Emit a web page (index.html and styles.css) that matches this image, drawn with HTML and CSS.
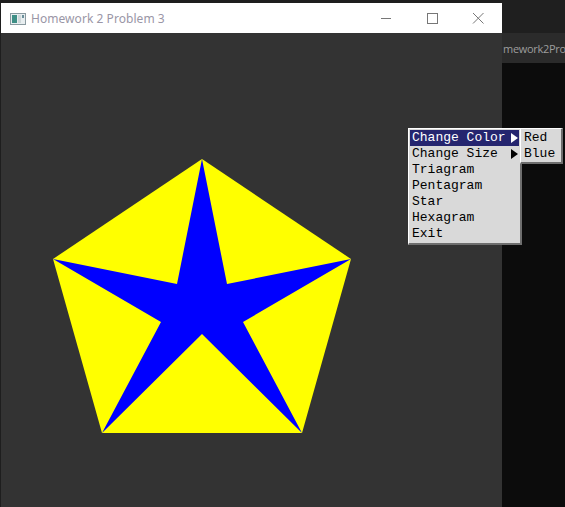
FILE: index.html
```html
<!DOCTYPE html>
<html>
<head>
<meta charset="utf-8">
<link rel="stylesheet" href="styles.css">
</head>
<body>
<div class="screen">
  <div class="edge"></div>
  <div class="window">
    <div class="titlebar">
      <svg class="app-icon" width="16" height="12" viewBox="0 0 16 12">
        <rect x="0.5" y="0.5" width="15" height="11" fill="#e8eef0" stroke="#8a9aa0"/>
        <rect x="2" y="2" width="5" height="8" fill="#3f8f86"/>
        <rect x="8" y="2" width="3" height="8" fill="#cfd8da"/>
        <rect x="12" y="2" width="2" height="3" fill="#6a8f9a"/>
      </svg>
      <span class="title">Homework 2 Problem 3</span>
      <div class="controls">
        <svg class="ctl" width="46" height="30" viewBox="0 0 46 30"><line x1="18" y1="15.5" x2="28" y2="15.5" stroke="#777" stroke-width="1"/></svg>
        <svg class="ctl" width="46" height="30" viewBox="0 0 46 30"><rect x="18.5" y="10.5" width="10" height="10" fill="none" stroke="#777" stroke-width="1"/></svg>
        <svg class="ctl" width="46" height="30" viewBox="0 0 46 30"><path d="M18 10 L28.5 20.5 M28.5 10 L18 20.5" stroke="#777" stroke-width="1" fill="none"/></svg>
      </div>
    </div>
    <div class="client">
      <svg class="drawing" width="501" height="474" viewBox="0 0 501 474">
        <polygon points="201,126 350,226 301,400 101,400 52,226" fill="#ffff00"/>
        <polygon points="201,126 226,251 350,226 242,289 301,400 201,301 101,400 160,289 52,226 176,251" fill="#0000ff"/>
      </svg>
      <div class="menu">
        <div class="item active"><span>Change Color</span><span class="arrow white"></span></div>
        <div class="item"><span>Change Size</span><span class="arrow"></span></div>
        <div class="item"><span>Triagram</span></div>
        <div class="item"><span>Pentagram</span></div>
        <div class="item"><span>Star</span></div>
        <div class="item"><span>Hexagram</span></div>
        <div class="item"><span>Exit</span></div>
      </div>
      <div class="submenu">
        <div class="item"><span>Red</span></div>
        <div class="item"><span>Blue</span></div>
      </div>
    </div>
  </div>
  <div class="side">
    <div class="side-top"></div>
    <div class="tabbar"><span class="tab">mework2Pro</span></div>
    <div class="side-body"></div>
  </div>
</div>
</body>
</html>
```

FILE: styles.css
```css
html, body {
  margin: 0;
  padding: 0;
  background: #0c0c0c;
}
.screen {
  display: flex;
  width: 565px;
  height: 507px;
  overflow: hidden;
  background: #1e1e1e;
}
.edge {
  width: 1px;
  flex: none;
  background: #1e1e1e;
}
.window {
  width: 501px;
  flex: none;
  margin-top: 3px;
  display: flex;
  flex-direction: column;
  position: relative;
}
.titlebar {
  height: 30px;
  background: #ffffff;
  display: flex;
  align-items: center;
}
.app-icon {
  margin-left: 9px;
  margin-top: 1px;
}
.title {
  margin-left: 5px;
  font-family: "Noto Sans", "Open Sans", sans-serif;
  font-size: 12px;
  color: #9a96a6;
  letter-spacing: 0.05px;
}
.controls {
  margin-left: auto;
  display: flex;
  margin-right: 1px;
}
.ctl {
  display: block;
}
.client {
  flex: 1;
  background: #333333;
  position: relative;
}
.drawing {
  display: block;
}
.menu {
  position: absolute;
  left: 407px;
  top: 95px;
  width: 108px;
  padding: 1px 1px 1px 2px;
  background: #d9d9d9;
  border-top: 1px solid #ffffff;
  border-left: 1px solid #ffffff;
  border-right: 2px solid #6e6e6e;
  border-bottom: 2px solid #6e6e6e;
  font-family: "Liberation Mono", "DejaVu Sans Mono", monospace;
  font-size: 13px;
  color: #000;
}
.submenu {
  position: absolute;
  left: 519px;
  top: 95px;
  width: 37px;
  padding: 1px 1px 0 2px;
  background: #d9d9d9;
  border-top: 1px solid #ffffff;
  border-left: 1px solid #ffffff;
  border-right: 2px solid #6e6e6e;
  border-bottom: 2px solid #6e6e6e;
  font-family: "Liberation Mono", "DejaVu Sans Mono", monospace;
  font-size: 13px;
  color: #000;
}
.item {
  height: 16px;
  line-height: 16px;
  display: flex;
  align-items: center;
  padding-left: 1px;
  white-space: pre;
}
.item.active {
  background: #25256f;
  color: #ffffff;
  margin-left: -1px;
  padding-left: 2px;
}
.arrow {
  margin-left: auto;
  margin-right: 1px;
  width: 0;
  height: 0;
  border-top: 5px solid transparent;
  border-bottom: 5px solid transparent;
  border-left: 7px solid #000;
}
.arrow.white {
  border-left-color: #ffffff;
}
.side {
  flex: 1;
  min-width: 0;
  display: flex;
  flex-direction: column;
}
.side-top {
  height: 33px;
  background: #1f1f1f;
}
.tabbar {
  height: 30px;
  background: #2b2b2b;
  display: flex;
  align-items: center;
  overflow: hidden;
}
.tab {
  font-family: "Open Sans", "Noto Sans", sans-serif;
  font-size: 11px;
  letter-spacing: -0.3px;
  color: #9d9d9d;
  white-space: nowrap;
  margin-left: 1px;
}
.side-body {
  flex: 1;
  background: #0c0c0c;
}
```
